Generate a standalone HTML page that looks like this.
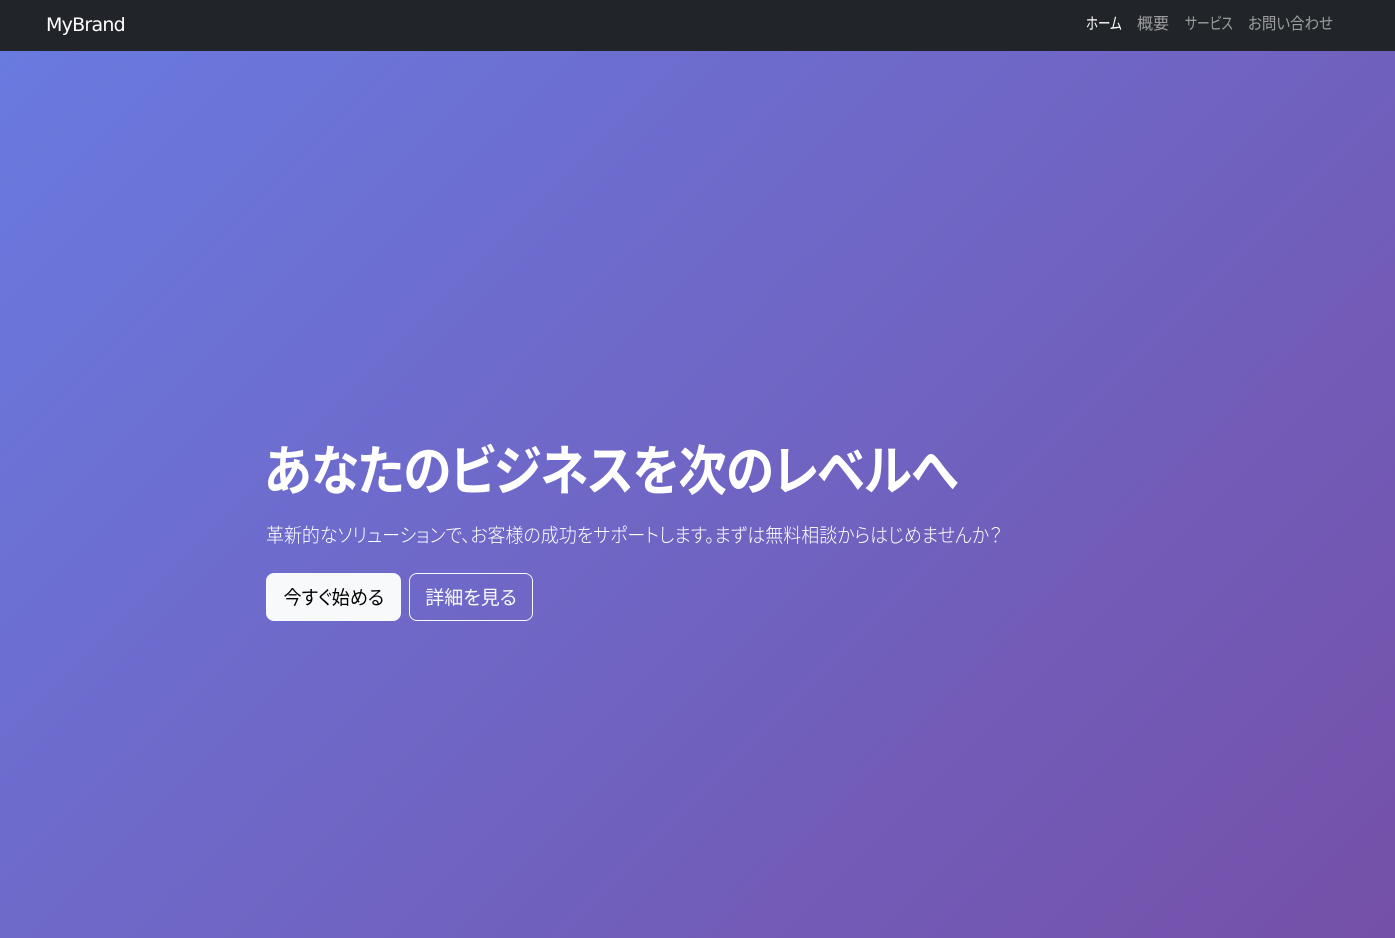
<!DOCTYPE html>
<html lang="ja">
<head>
<meta charset="utf-8">
<title>MyBrand</title>
<style>
*{box-sizing:border-box;margin:0;padding:0}
html,body{width:1395px;height:938px;overflow:hidden}
body{position:relative;font-family:"Liberation Sans","Noto Sans CJK JP",sans-serif;background:#212529;font-feature-settings:"palt" 1}
.jp{font-family:"Noto Sans CJK JP",sans-serif}
.hero{position:absolute;left:0;top:0;width:1395px;height:938px;background:linear-gradient(135deg,#697be1 0%,#7550a8 100%)}
nav{position:absolute;left:0;top:0;width:1395px;height:51px;background:#212529}
.brand{position:absolute;left:46px;top:12px;font-family:"DejaVu Sans",sans-serif;font-size:19px;line-height:26px;color:#fff;letter-spacing:-.75px;white-space:nowrap}
.l{position:absolute;top:10px;font-size:16px;line-height:24px;color:rgba(255,255,255,.55);white-space:nowrap;transform-origin:0 50%}
h1{position:absolute;left:264px;top:434px;font-size:54px;line-height:65px;font-weight:700;color:#fff;white-space:nowrap;letter-spacing:-1px;transform:scaleX(.9);transform-origin:0 50%}
p{position:absolute;left:266px;top:519px;font-size:19.5px;line-height:30px;font-weight:300;color:#fff;white-space:nowrap;transform:scaleX(.921);transform-origin:0 50%}
.b{position:absolute;top:573px;height:48px;border-radius:8px;font-size:19px;line-height:46px;text-align:center;white-space:nowrap;border:1px solid #f8f9fa}
.b span{display:inline-block}
.b1{left:266px;width:135px;background:#f8f9fa;color:#000}
.b1 span{transform:scaleX(.953)}
.b2{left:409px;width:124px;color:#f8f9fa;background:transparent}
</style>
</head>
<body>
<div class="hero"></div>
<nav>
<div class="brand">MyBrand</div>
<div class="l jp" style="left:1086px;color:#fff;transform:scaleX(.78)">ホーム</div>
<div class="l jp" style="left:1137px">概要</div>
<div class="l jp" style="left:1185px;transform:scaleX(.8)">サービス</div>
<div class="l jp" style="left:1248px;transform:scaleX(.904)">お問い合わせ</div>
</nav>
<h1 class="jp">あなたのビジネスを次のレベルへ</h1>
<p class="jp">革新的なソリューションで、お客様の成功をサポートします。まずは無料相談からはじめませんか？</p>
<div class="b b1 jp"><span>今すぐ始める</span></div>
<div class="b b2 jp"><span>詳細を見る</span></div>
</body>
</html>
